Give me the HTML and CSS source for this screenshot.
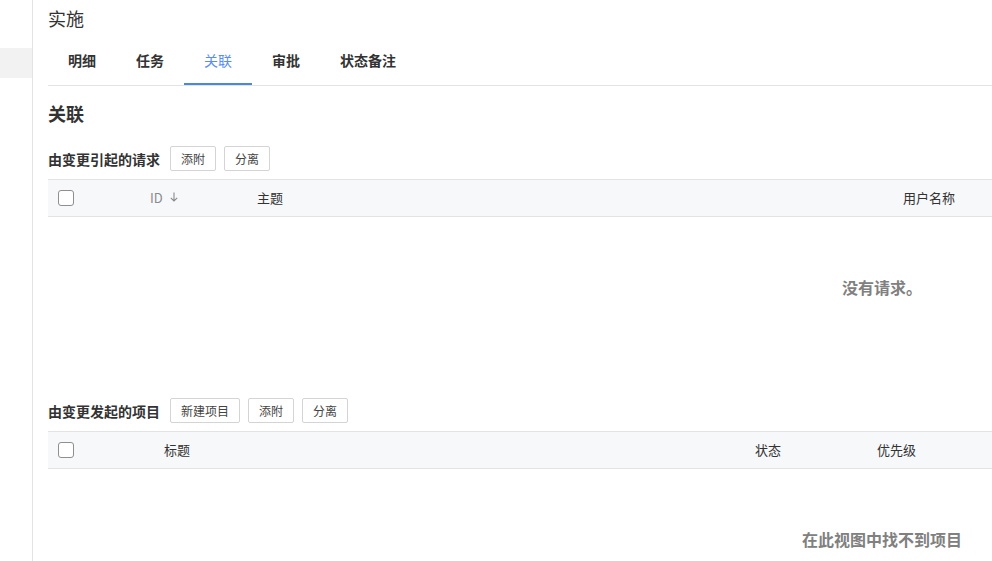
FILE: index.html
```html
<!DOCTYPE html>
<html lang="zh-CN">
<head>
  <meta charset="UTF-8">
  <title>实施</title>
  <link rel="stylesheet" href="styles.css">
</head>
<body>
  <div class="page">
    <div class="sidebar">
      <div class="side-item"></div>
    </div>
    <div class="main">
      <h2 class="title">实施</h2>
      <ul class="tabs">
        <li>明细</li>
        <li>任务</li>
        <li class="active">关联</li>
        <li>审批</li>
        <li>状态备注</li>
      </ul>

      <h3 class="heading">关联</h3>

      <div class="toolbar">
        <span class="label">由变更引起的请求</span>
        <button class="btn">添附</button>
        <button class="btn">分离</button>
      </div>
      <div class="table">
        <div class="thead cols-req">
          <span class="cell"><i class="check"></i></span>
          <span class="cell muted">ID
            <svg class="arrow" width="8" height="10" viewBox="0 0 8 10"><path d="M4 0.5V9M0.8 5.8L4 9L7.2 5.8" fill="none" stroke="#8a8a8a" stroke-width="1.1"/></svg>
          </span>
          <span class="cell">主题</span>
          <span class="cell">用户名称</span>
        </div>
        <div class="empty">没有请求。</div>
      </div>

      <div class="toolbar">
        <span class="label">由变更发起的项目</span>
        <button class="btn">新建项目</button>
        <button class="btn">添附</button>
        <button class="btn">分离</button>
      </div>
      <div class="table">
        <div class="thead cols-proj">
          <span class="cell"><i class="check"></i></span>
          <span class="cell">标题</span>
          <span class="cell">状态</span>
          <span class="cell">优先级</span>
        </div>
        <div class="empty">在此视图中找不到项目</div>
      </div>
    </div>
  </div>
</body>
</html>
```

FILE: styles.css
```css
*{margin:0;padding:0;box-sizing:border-box;}
html,body{width:100%;height:100%;overflow:hidden;background:#fff;}
body{font-family:"Noto Sans CJK SC","Liberation Sans",sans-serif;color:#333;}

.page{display:flex;height:100%;}
.sidebar{width:33px;flex:none;border-right:1px solid #e3e3e3;padding-top:48px;}
.side-item{height:30px;background:#f2f2f2;}

.main{flex:none;width:1683px;padding-left:15px;}

.title{font-size:18px;font-weight:normal;line-height:37px;margin-bottom:2px;color:#333;}

.tabs{display:flex;list-style:none;border-bottom:1px solid #e3e3e3;}
.tabs li{padding:0 20px 2px;font-size:14px;font-weight:bold;line-height:42px;border-bottom:2px solid transparent;color:#333;}
.tabs li.active{color:#5b8def;font-weight:normal;border-bottom-color:#4a86e8;}

.heading{font-size:18px;font-weight:bold;line-height:26px;margin-top:14px;color:#333;}

.toolbar{display:flex;align-items:center;gap:8px;margin-top:20px;}
.toolbar .label{font-size:14px;font-weight:bold;margin-right:2px;color:#333;}
.btn{height:25px;padding:0 10px;font:12px "Noto Sans CJK SC","Liberation Sans",sans-serif;color:#444;background:#fff;border:1px solid #d4d4d4;border-radius:2px;}

.table{margin-top:8px;}
.thead{display:grid;align-items:center;height:38px;background:#f7f8fa;border-top:1px solid #e3e3e3;border-bottom:1px solid #e3e3e3;padding:0 0 2px 10px;font-size:13px;color:#333;}
.cols-req{grid-template-columns:92px 107px 646px auto;}
.cols-proj{grid-template-columns:106px 591px 122px auto;}
.cell{display:flex;align-items:center;}
.muted{color:#8a8a8a;}
.arrow{margin-left:7px;}
.check{display:block;width:16px;height:16px;border:1px solid #8f8f8f;border-radius:3px;background:#fff;margin-top:2px;}

.empty{text-align:center;font-size:16px;font-weight:bold;color:#808080;line-height:24px;padding:58px 0 92px;}
.table + .toolbar{margin-top:7px;}
```
